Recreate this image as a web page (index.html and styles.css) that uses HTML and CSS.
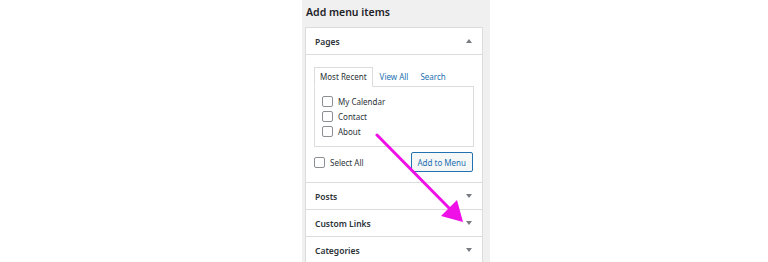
FILE: index.html
```html
<!DOCTYPE html>
<html lang="en">
<head>
  <meta charset="UTF-8">
  <meta name="viewport" content="width=device-width, initial-scale=1.0">
  <title>Add menu items</title>
  <link rel="stylesheet" href="styles.css">
</head>
<body>

  <div class="side">
    <h3 class="side-title">Add menu items</h3>

    <div class="accordion">
      <div class="section open">
        <div class="section-title">Pages <span class="caret up"></span></div>
        <div class="section-body">
          <div class="tabs">
            <span class="tab active">Most Recent</span>
            <span class="tab">View All</span>
            <span class="tab">Search</span>
          </div>
          <div class="tab-panel">
            <label class="check"><span class="box"></span>My Calendar</label>
            <label class="check"><span class="box"></span>Contact</label>
            <label class="check"><span class="box"></span>About</label>
          </div>
          <div class="actions">
            <label class="check"><span class="box"></span>Select All</label>
            <button class="add-btn">Add to Menu</button>
          </div>
        </div>
      </div>
      <div class="section">
        <div class="section-title">Posts <span class="caret"></span></div>
      </div>
      <div class="section">
        <div class="section-title">Custom Links <span class="caret"></span></div>
      </div>
      <div class="section">
        <div class="section-title">Categories <span class="caret"></span></div>
      </div>
    </div>

    <svg class="pointer" width="100" height="100" viewBox="0 0 100 100">
      <line x1="2" y1="4" x2="75" y2="78" stroke="#ee10e6" stroke-width="3" stroke-linecap="round"/>
      <polygon points="88,91 66,85 82,69" fill="#ee10e6"/>
    </svg>
  </div>

</body>
</html>
```

FILE: styles.css
```css
body {
  margin: 0;
  background-color: #fff;
  font-family: "Noto Sans", "Open Sans", sans-serif;
  color: #1d2327;
}
.side {
  position: relative;
  margin-left: 302px;
  width: 188px;
  height: 262px;
  background-color: #f0f0f1;
  overflow: hidden;
}
.side-title {
  margin: 0;
  padding: 3px 0 0 4px;
  height: 24px;
  font-size: 10.5px;
  font-weight: 600;
  line-height: 18px;
}
.accordion {
  margin-left: 3px;
  width: 176px;
  border: 1px solid #dcdcde;
  background-color: #fff;
}
.section {
  border-top: 1px solid #dcdcde;
}
.section:first-child {
  border-top: none;
}
.section-title {
  display: flex;
  justify-content: space-between;
  align-items: center;
  height: 26px;
  padding: 0 10px 0 9px;
  font-size: 8.5px;
  font-weight: 600;
  color: #2c3338;
}
.open .section-title {
  border-bottom: 1px solid #dcdcde;
}
.caret {
  width: 0;
  height: 0;
  border-left: 3px solid transparent;
  border-right: 3px solid transparent;
  border-top: 4px solid #787c82;
}
.caret.up {
  border-top: none;
  border-bottom: 4px solid #787c82;
}
.section-body {
  padding: 12px 8px 10px 8px;
}
.tabs {
  display: flex;
  font-size: 8px;
  line-height: 17px;
  white-space: nowrap;
}
.tab {
  padding: 0 4px;
  margin-right: 2px;
  color: #2271b1;
  border: 1px solid transparent;
}
.tab.active {
  padding: 0 5px;
  color: #2c3338;
  border-color: #dcdcde;
  border-bottom-color: #fff;
  margin-bottom: -1px;
  position: relative;
  background: #fff;
}
.tab-panel {
  height: 61px;
  border: 1px solid #dcdcde;
  padding: 7px 0 0 7px;
  box-sizing: border-box;
}
.check {
  display: flex;
  align-items: center;
  height: 15px;
  font-size: 8px;
  color: #2c3338;
  white-space: nowrap;
}
.box {
  width: 9px;
  height: 9px;
  border: 1px solid #8c8f94;
  border-radius: 2px;
  margin-right: 5px;
  background: #fff;
}
.actions {
  display: flex;
  justify-content: space-between;
  align-items: center;
  margin-top: 5px;
}
.add-btn {
  font-family: inherit;
  font-size: 8px;
  color: #2271b1;
  background-color: #f6f7f7;
  border: 1px solid #2271b1;
  border-radius: 2px;
  padding: 0 6px;
  height: 20px;
  margin-right: 1px;
}
.pointer {
  position: absolute;
  left: 73px;
  top: 131px;
}
```
